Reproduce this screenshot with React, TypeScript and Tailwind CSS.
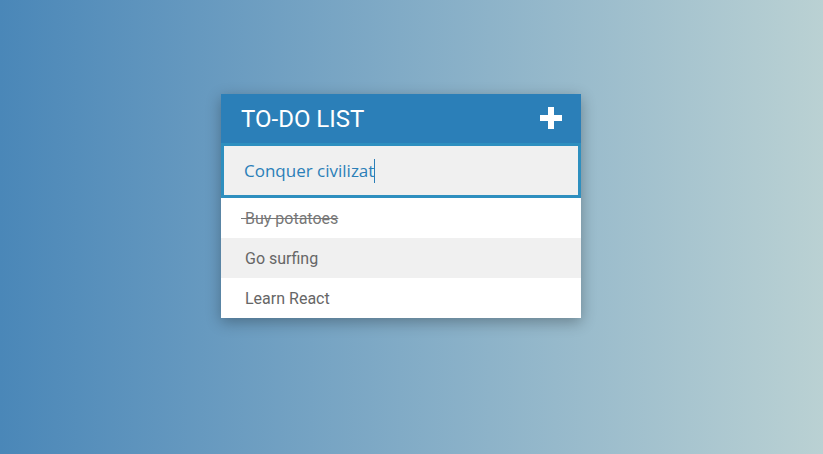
import React from "react";

export default function App() {
  return (
    <div className="w-[823px] h-[454px] bg-gradient-to-r from-[#4a87b8] to-[#bad1d3] flex">
      <div className="mt-[94px] ml-[221px] w-[360px] h-fit bg-white shadow-[0_4px_14px_rgba(0,0,0,0.3)]">
        <div className="h-[49px] bg-[#2b7fb8] flex items-center justify-between pl-[20px] pr-[19px]">
          <span className="text-white text-[24px] leading-none pt-[1px]" style={{ fontFamily: "Roboto, sans-serif" }}>TO-DO LIST</span>
          <svg width="22" height="22" viewBox="0 0 22 22" className="mt-[-2px]">
            <rect x="8" y="0" width="6" height="22" fill="white" />
            <rect x="0" y="8" width="22" height="6" fill="white" />
          </svg>
        </div>
        <div className="h-[55px] bg-[#f0f0f0] border-[3px] border-[#2e8fbf] flex items-center pl-[20px]">
          <span className="text-[#2b7fb8] text-[17px]" style={{ fontFamily: "'Open Sans', sans-serif" }}>Conquer civilizat</span>
          <span className="w-px h-[24px] bg-[#2b7fb8]"></span>
        </div>
        <ul style={{ fontFamily: "Roboto, sans-serif" }} className="text-[16px] text-[#666]">
          <li className="h-[40px] flex items-center pt-[2px] pl-[20px] bg-white"><span className="line-through text-[#777] whitespace-pre">{"\u00a0Buy potatoes"}</span></li>
          <li className="h-[40px] flex items-center pt-[2px] pl-[24px] bg-[#f0f0f0]">Go surfing</li>
          <li className="h-[40px] flex items-center pt-[2px] pl-[24px] bg-white">Learn React</li>
        </ul>
      </div>
    </div>
  );
}
